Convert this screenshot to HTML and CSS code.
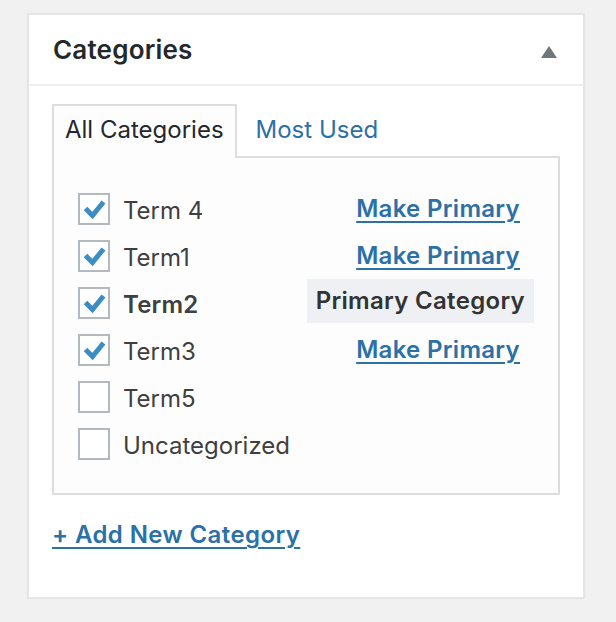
FILE: index.html
```html
<!DOCTYPE html>
<html lang="en">
<head>
<meta charset="utf-8">
<title>Categories</title>
<link rel="stylesheet" href="styles.css">
</head>
<body>
<div class="postbox">
  <div class="postbox-header">
    <h2 class="title">Categories</h2>
    <span class="toggle" aria-hidden="true"></span>
  </div>
  <div class="inside">
    <ul class="tabs">
      <li class="tab active">All Categories</li>
      <li class="tab"><a class="tab-link" href="#">Most Used</a></li>
    </ul>
    <div class="panel">
      <ul class="checklist">
        <li class="row">
          <label class="item"><span class="cb"><svg class="check" viewBox="0 0 28 28"><polyline points="5.5,13.5 12.5,20.5 23.5,7"/></svg></span><span class="name">Term 4</span></label>
          <a class="make" href="#">Make Primary</a>
        </li>
        <li class="row">
          <label class="item"><span class="cb"><svg class="check" viewBox="0 0 28 28"><polyline points="5.5,13.5 12.5,20.5 23.5,7"/></svg></span><span class="name">Term1</span></label>
          <a class="make" href="#">Make Primary</a>
        </li>
        <li class="row">
          <label class="item"><span class="cb"><svg class="check" viewBox="0 0 28 28"><polyline points="5.5,13.5 12.5,20.5 23.5,7"/></svg></span><span class="name strong">Term2</span></label>
          <span class="primary-tag">Primary Category</span>
        </li>
        <li class="row">
          <label class="item"><span class="cb"><svg class="check" viewBox="0 0 28 28"><polyline points="5.5,13.5 12.5,20.5 23.5,7"/></svg></span><span class="name">Term3</span></label>
          <a class="make" href="#">Make Primary</a>
        </li>
        <li class="row">
          <label class="item"><span class="cb"></span><span class="name">Term5</span></label>
        </li>
        <li class="row">
          <label class="item"><span class="cb"></span><span class="name">Uncategorized</span></label>
        </li>
      </ul>
    </div>
    <p class="add-wrap"><a class="add-new" href="#">+ Add New Category</a></p>
  </div>
</div>
</body>
</html>
```
FILE: styles.css
```css
* { box-sizing: border-box; }

body {
  margin: 0;
  background: #f1f1f1;
  font-family: Inter, "Noto Sans", "Liberation Sans", sans-serif;
  color: #444;
}

.postbox {
  margin: 13px 0 0 27px;
  width: 558px;
  background: #fff;
  border: 2px solid #e5e5e5;
  box-shadow: 0 2px 2px rgba(0, 0, 0, 0.04);
}

.postbox-header {
  display: flex;
  align-items: center;
  justify-content: space-between;
  height: 71px;
  padding: 0 26px 0 24px;
  border-bottom: 2px solid #eeeeee;
}

.title {
  margin: 0;
  font-size: 26px;
  font-weight: 600;
  line-height: 30px;
  letter-spacing: 0.2px;
  color: #23282d;
}

.toggle {
  width: 0;
  height: 0;
  margin-top: 4px;
  border-left: 8px solid transparent;
  border-right: 8px solid transparent;
  border-bottom: 12px solid #72777c;
}

.inside {
  padding: 18px 23px 45px 23px;
}

.tabs {
  list-style: none;
  margin: 0;
  padding: 0;
  display: flex;
}

.tab {
  height: 54px;
  padding: 0 11px 5px;
  display: flex;
  align-items: center;
  font-size: 24px;
  color: #23282d;
  border: 2px solid transparent;
  border-bottom: 0;
  margin-bottom: -2px;
}

.tab + .tab {
  margin-left: 6px;
}

.tab.active {
  position: relative;
  z-index: 1;
  background: #fdfdfd;
  border-color: #dddddd;
}

.tab-link {
  color: #2c70a8;
  text-decoration: none;
}

.panel {
  background: #fdfdfd;
  border: 2px solid #dddddd;
  padding: 27px 24px 26px 24px;
}

.checklist {
  list-style: none;
  margin: 0;
  padding: 0;
}

.row {
  display: flex;
  align-items: center;
  height: 47px;
}

.item {
  flex: 1;
  display: flex;
  align-items: center;
  gap: 13px;
  font-size: 24px;
  line-height: 30px;
  color: #3f3f3f;
}

.name {
  padding-top: 4px;
}

.strong {
  font-weight: 600;
  letter-spacing: 0.2px;
}

.cb {
  flex: none;
  width: 32px;
  height: 32px;
  border: 2px solid #b4b9be;
  background: #fff;
  display: flex;
}

.check {
  width: 28px;
  height: 28px;
  fill: none;
  stroke: #3b8dc3;
  stroke-width: 5;
}

.make {
  margin-right: 14px;
  font-size: 24px;
  font-weight: 600;
  line-height: 30px;
  letter-spacing: 0.3px;
  color: #2c70a8;
  text-decoration: underline;
  text-decoration-thickness: 2px;
  text-underline-offset: 4px;
}

.primary-tag {
  height: 44px;
  margin-bottom: 4px;
  padding: 0 9px;
  display: flex;
  align-items: center;
  background: #eef0f3;
  font-size: 24px;
  font-weight: 600;
  letter-spacing: 0.3px;
  color: #333;
}

.add-wrap {
  margin: 25px 0 0;
  line-height: 30px;
}

.add-new {
  font-size: 24px;
  font-weight: 600;
  letter-spacing: 0.4px;
  color: #2c70a8;
  text-decoration: underline;
  text-decoration-thickness: 2px;
  text-underline-offset: 4px;
}
```
